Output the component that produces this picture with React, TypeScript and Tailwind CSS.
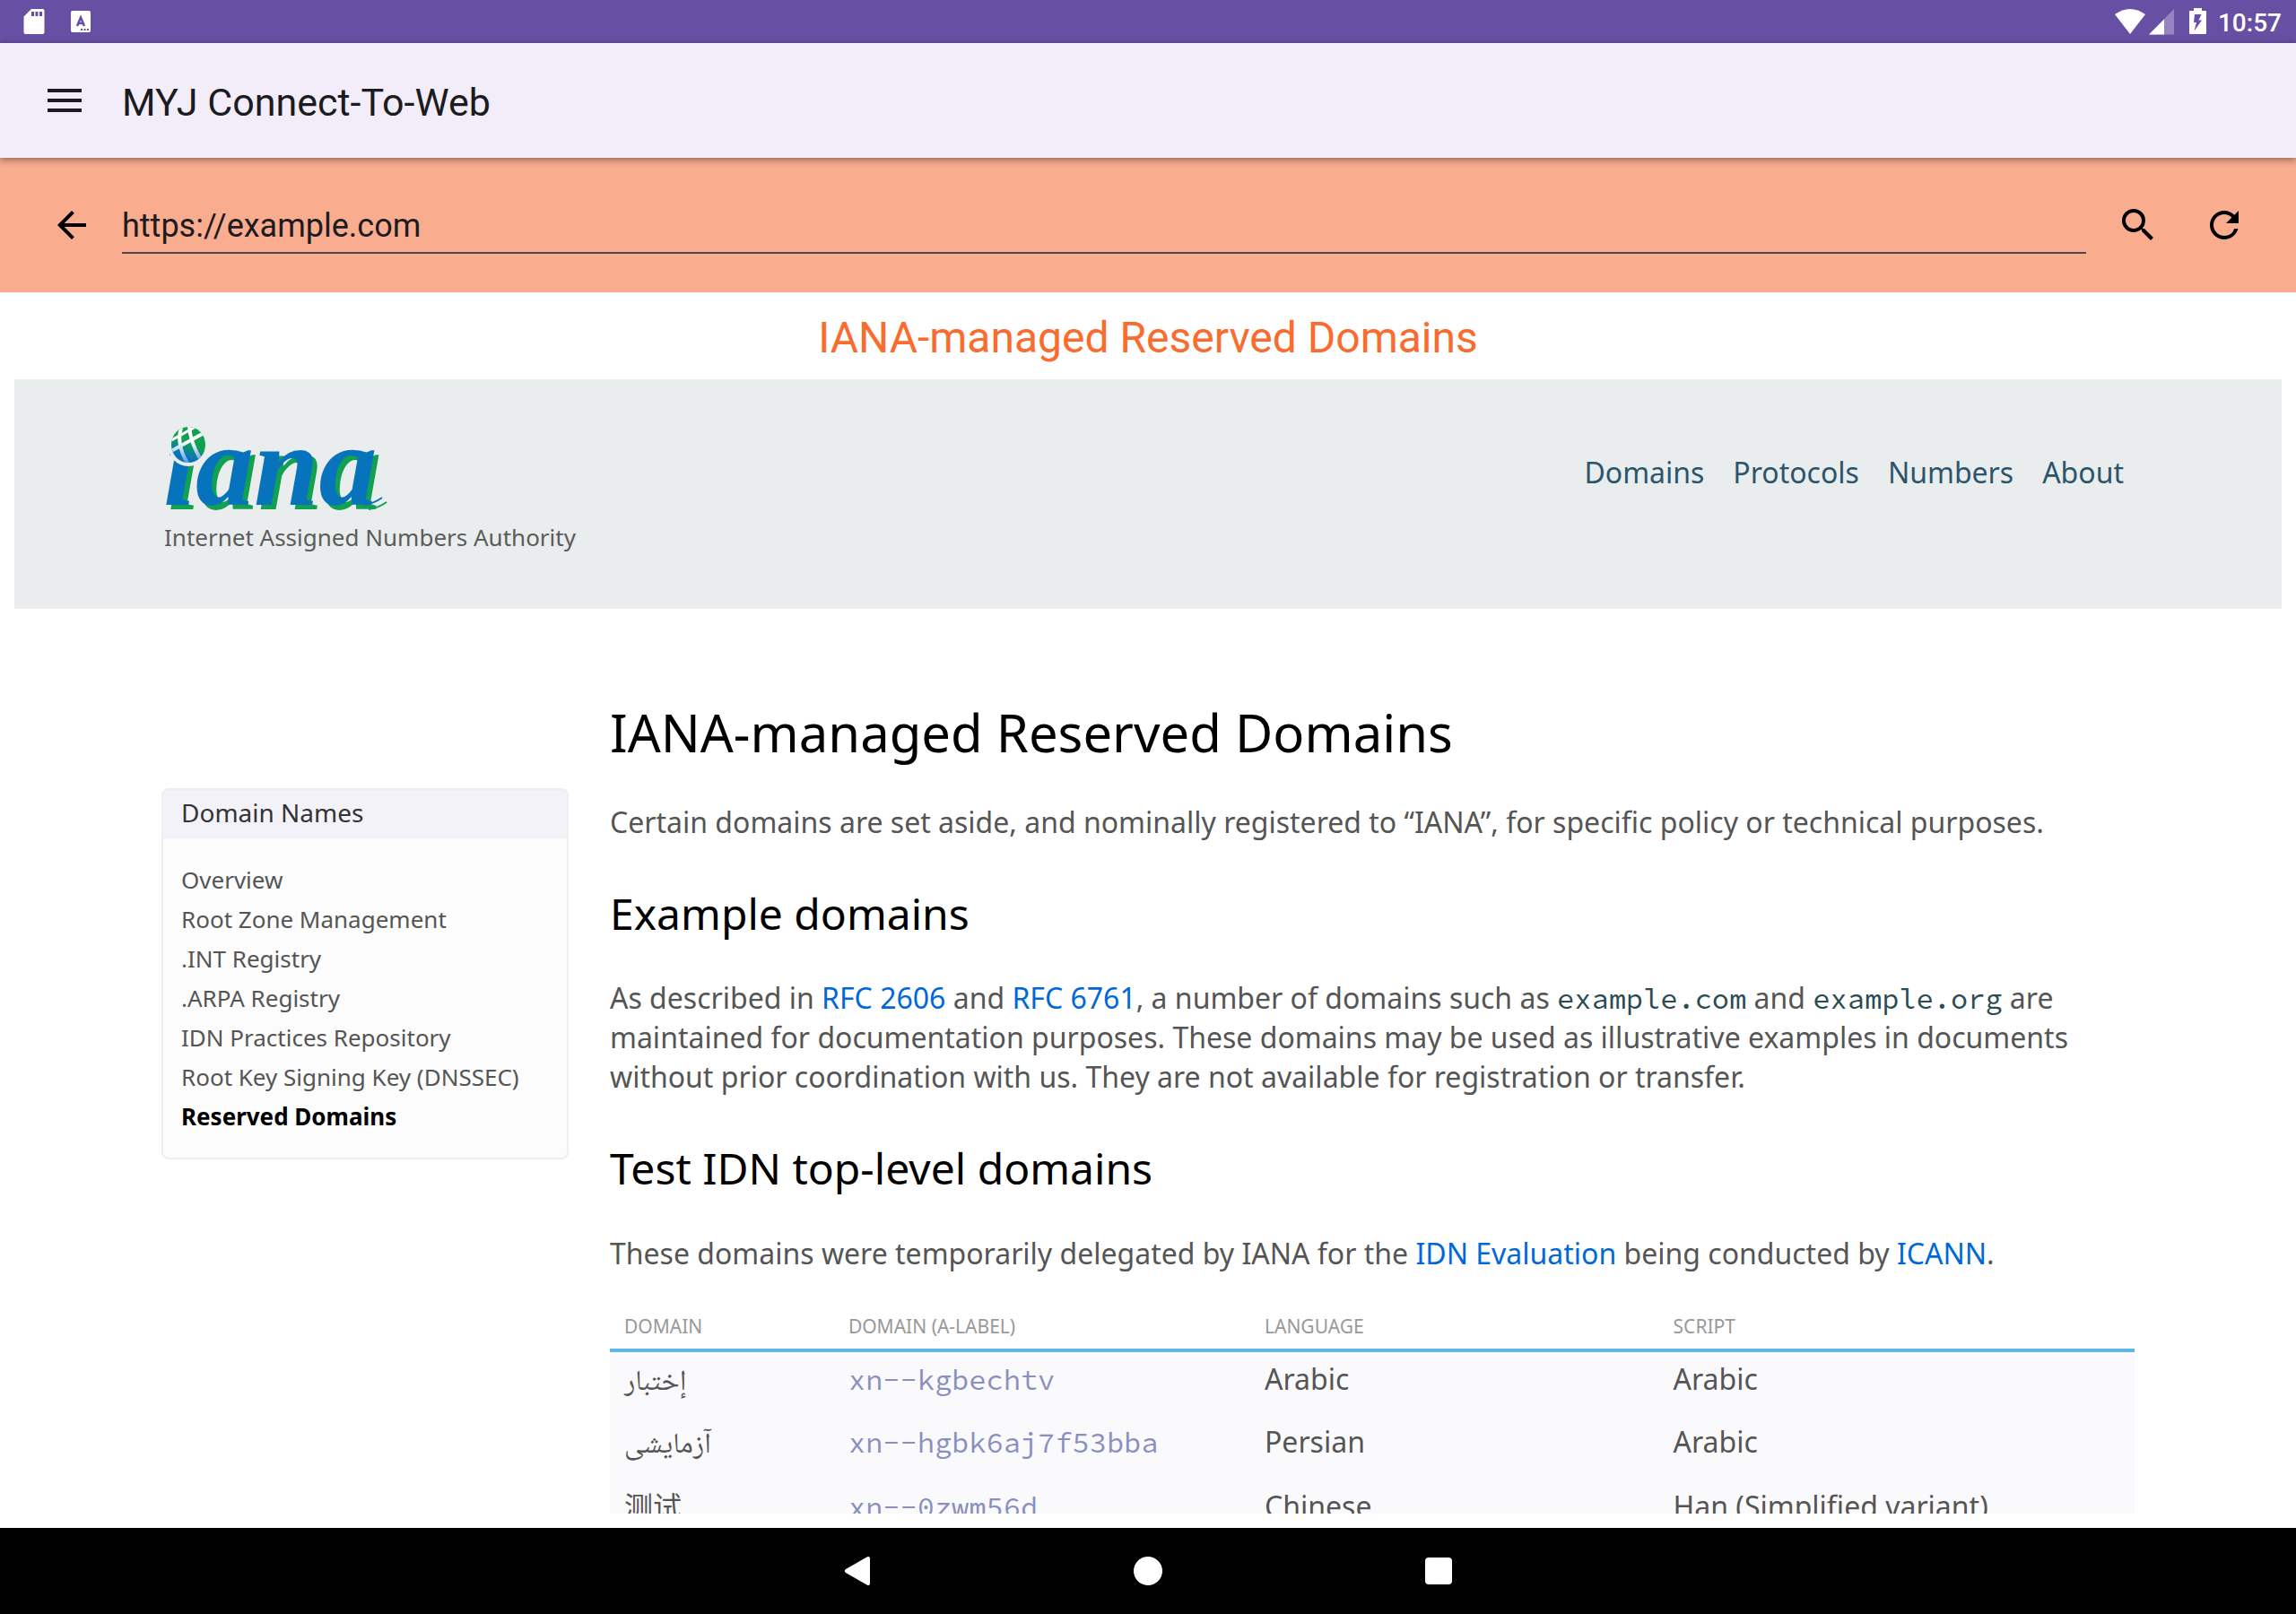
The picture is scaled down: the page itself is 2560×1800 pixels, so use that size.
import React from "react";
import { MdArrowBack, MdRefresh, MdSearch } from "react-icons/md";

const NAV = ["Domains", "Protocols", "Numbers", "About"];

const SIDE_LINKS = [
  "Overview",
  "Root Zone Management",
  ".INT Registry",
  ".ARPA Registry",
  "IDN Practices Repository",
  "Root Key Signing Key (DNSSEC)",
];

const ROWS = [
  { domain: "إختبار", label: "xn--kgbechtv", language: "Arabic", script: "Arabic" },
  { domain: "آزمایشی", label: "xn--hgbk6aj7f53bba", language: "Persian", script: "Arabic" },
  { domain: "测试", label: "xn--0zwm56d", language: "Chinese", script: "Han (Simplified variant)" },
];

function StatusBar() {
  return (
    <div className="flex h-12 shrink-0 items-center justify-between bg-[#6750a4] pr-4 pl-6 text-white">
      <svg width="80" height="48" viewBox="24 0 80 48" fill="#fff" aria-hidden="true">
        <path
          fillRule="evenodd"
          d="M35 10h12.500a2 2 0 0 1 2 2v24a2 2 0 0 1-2 2h-19a2 2 0 0 1-2-2V18.500zM35 13v5h3v-5zM39.500 13v5h3v-5zM44 13v5h3v-5z"
        />
        <rect x="79" y="12" width="22" height="24" rx="2" />
        <path d="M86 29 90 19.500 94 29M87.500 26h5" fill="none" stroke="#6750a4" strokeWidth="2.600" />
        <path d="M90 32h2v2h-2zM93.500 32h2v2h-2zM97 32h2v2h-2z" fill="#6750a4" />
      </svg>
      <div className="flex items-center gap-3">
        <svg width="104" height="48" viewBox="2356 0 104 48" fill="#fff" aria-hidden="true">
          <path d="M2357 16Q2374 4 2391 16L2374 38z" />
          <path d="M2423 10V38.500H2395z" opacity=".3" />
          <path d="M2412 21.500V38.500H2395z" />
          <path
            fillRule="evenodd"
            d="M2445 9h9v3h4a1 1 0 0 1 1 1v24a1 1 0 0 1-1 1h-17a1 1 0 0 1-1-1V13a1 1 0 0 1 1-1h4zM2446 16l-1 9h3l-2.500 9.500 8.500-12h-3.500l3-6.500z"
          />
        </svg>
        <span className="pt-1 font-['Roboto',sans-serif] text-[28px] leading-8 font-medium">10:57</span>
      </div>
    </div>
  );
}

function AppBar() {
  return (
    <header className="relative z-10 flex h-32 shrink-0 items-center gap-[45px] bg-[#f3edf9] pl-[53px] shadow-[0_2px_8px_rgba(0,0,0,0.45)]">
      <button type="button" aria-label="Open menu" className="flex h-[26px] w-[38px] flex-col justify-between">
        <span className="h-1 w-full bg-[#1c1b1f]" />
        <span className="h-1 w-full bg-[#1c1b1f]" />
        <span className="h-1 w-full bg-[#1c1b1f]" />
      </button>
      <h1 className="pt-1 text-[43px] leading-[52px] text-[#1c1b1f]">MYJ Connect-To-Web</h1>
    </header>
  );
}

function AddressBar() {
  return (
    <form className="flex h-[150px] shrink-0 items-center bg-[#f9ac8e] pr-14 pl-14" onSubmit={(e) => e.preventDefault()}>
      <button type="button" aria-label="Back" className="mr-8 text-black">
        <MdArrowBack size={48} />
      </button>
      <input
        type="text"
        aria-label="Address"
        defaultValue="https://example.com"
        className="h-16 min-w-0 flex-1 border-b-2 border-[#49484d] bg-transparent pt-1 text-[36px] text-[#1c1b1f] outline-none"
      />
      <button type="submit" aria-label="Search" className="ml-[34px] text-black">
        <MdSearch size={48} />
      </button>
      <button type="button" aria-label="Refresh" className="ml-12 text-black">
        <MdRefresh size={48} />
      </button>
    </form>
  );
}

function Logo() {
  return (
    <svg width="480" height="160" viewBox="0 0 480 160" role="img" aria-label="IANA, Internet Assigned Numbers Authority">
      <defs>
        <linearGradient id="globe" x1="0.7" y1="0" x2="0.3" y2="1">
          <stop offset="0.45" stopColor="#12a150" />
          <stop offset="0.8" stopColor="#0873bd" />
        </linearGradient>
        <linearGradient id="mesh" gradientUnits="userSpaceOnUse" x1="28" y1="4" x2="28" y2="44">
          <stop offset="0.4" stopColor="#fff" />
          <stop offset="1" stopColor="#5c9fd6" />
        </linearGradient>
        <clipPath id="disc">
          <ellipse cx="28" cy="24" rx="19" ry="20" />
        </clipPath>
      </defs>
      <g className="drop-shadow-[5px_5px_0_#12a150]">
        <text
          x="0"
          y="91"
          fill="#0873bd"
          className="font-['Liberation_Serif',serif] text-[130px] font-bold italic"
        >
          iana
        </text>
        <path d="M224 91Q234 90 244 83" fill="none" stroke="#0873bd" strokeWidth="2" />
      </g>
      <ellipse cx="28" cy="24" rx="23" ry="24" fill="#e9edee" />
      <g clipPath="url(#disc)" fill="none" stroke="url(#mesh)">
        <rect x="8" y="3" width="40" height="42" fill="url(#globe)" stroke="none" />
        <path d="M9 19 36 4" strokeWidth="3" />
        <path d="M9 31 47 10" strokeWidth="4" />
        <path d="M20 5Q14 24 28 46" strokeWidth="4" />
        <path d="M29 3Q30 21 42 41" strokeWidth="4" />
      </g>
      <text x="1" y="137" fill="#5c5c5a" className="font-['Noto_Sans',sans-serif] text-[26px]">
        Internet Assigned Numbers Authority
      </text>
    </svg>
  );
}

function SiteHeader() {
  return (
    <div className="h-64 border-b-2 border-[#eee] bg-[#e9edee]">
      <div className="mx-auto flex max-w-[2200px] items-start justify-between pt-[49px] pr-3 pl-0.5">
        <a href="#home">
          <Logo />
        </a>
        <nav className="flex gap-8 pt-[33px] text-[32px] leading-[44px] text-[#2c556c]">
          {NAV.map((n) => (
            <a key={n} href={"#" + n.toLowerCase()}>
              {n}
            </a>
          ))}
        </nav>
      </div>
    </div>
  );
}

function Sidebar() {
  return (
    <aside className="mt-[200px] w-[454px] shrink-0 self-start overflow-hidden rounded-lg border-2 border-[#eee] bg-[#fcfcfc]">
      <h2 className="bg-[#f3f2f9] px-5 pt-[5px] pb-[9px] text-[28px] leading-10 text-[#333]">Domain Names</h2>
      <ul className="px-5 py-6 text-[26px] leading-[44px] text-[#555]">
        {SIDE_LINKS.map((l) => (
          <li key={l}>
            <a href="#domains">{l}</a>
          </li>
        ))}
        <li>
          <a href="#reserved" className="font-bold text-black">
            Reserved Domains
          </a>
        </li>
      </ul>
    </aside>
  );
}

function Code({ children }: { children: React.ReactNode }) {
  return (
    <code className="font-['Source_Code_Pro','Liberation_Mono',monospace] text-[32px] leading-none text-[#2b4a52]">
      {children}
    </code>
  );
}

function Link({ children }: { children: React.ReactNode }) {
  return (
    <a href="#ref" className="text-[#0068d9]">
      {children}
    </a>
  );
}

function Article() {
  return (
    <main className="min-w-0 flex-1 pt-[98px] text-[32px] leading-[44px] text-[#555]">
      <h1 className="text-[58px] leading-[80px] text-black">IANA-managed Reserved Domains</h1>
      <p className="mt-[38px]">
        Certain domains are set aside, and nominally registered to “IANA”, for specific policy or technical purposes.
      </p>
      <h2 className="mt-[47px] text-[48px] leading-[66px] text-black">Example domains</h2>
      <p className="mt-[39px]">
        As described in <Link>RFC 2606</Link> and <Link>RFC 6761</Link>, a number of domains such as{" "}
        <Code>example.com</Code> and <Code>example.org</Code> are maintained for documentation purposes. These domains
        may be used as illustrative examples in documents without prior coordination with us. They are not available for
        registration or transfer.
      </p>
      <h2 className="mt-[47px] text-[48px] leading-[66px] text-black">Test IDN top-level domains</h2>
      <p className="mt-10">
        These domains were temporarily delegated by IANA for the <Link>IDN Evaluation</Link> being conducted by{" "}
        <Link>ICANN</Link>.
      </p>
      <table className="mt-[42px] w-full table-fixed border-collapse text-left">
        <thead>
          <tr className="border-b-4 border-[#5bb7e5] text-[21px] leading-[30px] text-[#999]">
            <th className="w-[14.7%] px-4 pt-0.5 pb-[10px] font-normal">DOMAIN</th>
            <th className="w-[27.3%] px-4 pt-0.5 pb-[10px] font-normal">DOMAIN (A-LABEL)</th>
            <th className="w-[26.8%] px-4 pt-0.5 pb-[10px] font-normal">LANGUAGE</th>
            <th className="px-4 pt-0.5 pb-[10px] font-normal">SCRIPT</th>
          </tr>
        </thead>
        <tbody className="bg-[#fafafc]">
          {ROWS.map((r) => (
            <tr key={r.label} className="h-[72px] align-baseline">
              <td className="px-4 pt-2 font-['Noto_Sans','Noto_Naskh_Arabic','Noto_Sans_CJK_SC',sans-serif]">
                {r.domain}
              </td>
              <td className="px-4 pt-2 font-['Source_Code_Pro','Liberation_Mono',monospace] text-[#8a8fbf]">
                {r.label}
              </td>
              <td className="px-4 pt-2">{r.language}</td>
              <td className="px-4 pt-2">{r.script}</td>
            </tr>
          ))}
        </tbody>
      </table>
    </main>
  );
}

function SystemNav() {
  return (
    <div className="flex h-24 shrink-0 items-center justify-center bg-black">
      <button type="button" aria-label="System back" className="flex w-[324px] justify-center">
        <svg width="32" height="32" viewBox="0 0 32 32" fill="#fff" aria-hidden="true">
          <path d="M27 .3q3-1 3 2v27.400q0 3-3 2L3 18q-2.500-2 0-4z" />
        </svg>
      </button>
      <button type="button" aria-label="Home" className="flex w-[324px] justify-center">
        <span className="size-8 rounded-full bg-white" />
      </button>
      <button type="button" aria-label="Recent apps" className="flex w-[324px] justify-center">
        <span className="size-[30px] rounded-sm bg-white" />
      </button>
    </div>
  );
}

export default function App() {
  return (
    <div className="flex h-screen flex-col overflow-hidden bg-white font-['Roboto',sans-serif]">
      <StatusBar />
      <AppBar />
      <AddressBar />
      <div className="flex h-[97px] shrink-0 items-center justify-center pt-1 text-[48px] text-[#fa6b2e]">
        IANA-managed Reserved Domains
      </div>
      <div className="mx-4 mb-4 min-h-0 flex-1 overflow-hidden font-['Noto_Sans',sans-serif]">
        <SiteHeader />
        <div className="mx-auto flex max-w-[2200px] gap-[46px]">
          <Sidebar />
          <Article />
        </div>
      </div>
      <SystemNav />
    </div>
  );
}
